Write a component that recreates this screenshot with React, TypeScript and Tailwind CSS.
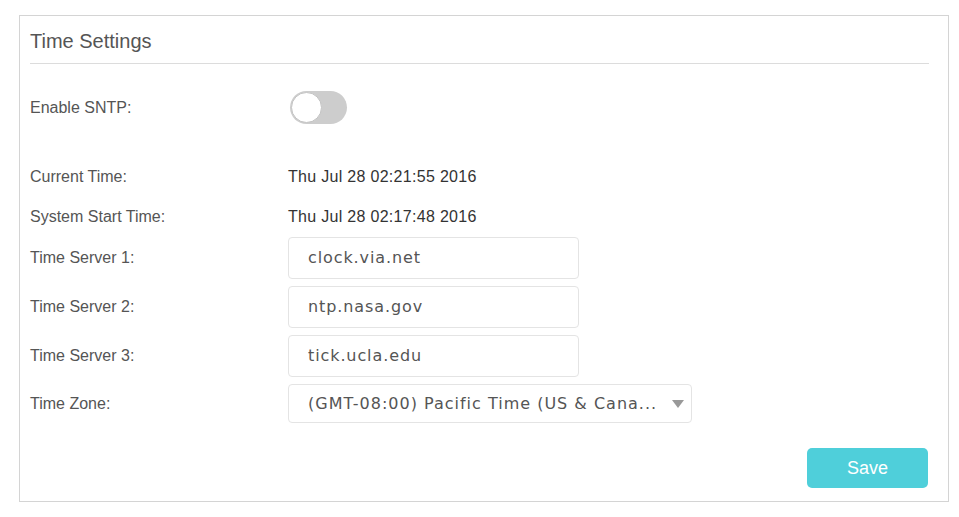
import React from "react";

const labelCls = "w-[258px] shrink-0 text-[16px] text-[#555]";
const font = { fontFamily: "'Liberation Sans', Arial, sans-serif" };
const inputFont = { fontFamily: "'DejaVu Sans', Verdana, sans-serif" };

function TextRow({ label, value, top }: { label: string; value: string; top: string }) {
  return (
    <div className={`flex items-center ${top}`}>
      <div className={labelCls}>{label}</div>
      <div className="h-[42px] w-[291px] rounded-[4px] border border-[#e4e4e4] bg-white flex items-center pl-[19px] text-[16px] tracking-[0.9px] text-[#555]" style={inputFont}>
        {value}
      </div>
    </div>
  );
}

export default function App() {
  return (
    <div className="w-[959px] h-[517px] bg-white pt-[15px] pl-[19px]" style={font}>
      <div className="w-[930px] h-[487px] border border-[#d4d4d4] pl-[10px] pr-[19px]">
        <div className="pt-[13px] pb-[10px] text-[20px] leading-[24px] text-[#555]">Time Settings</div>
        <div className="h-px bg-[#dcdcdc]" />
        <div className="flex items-center mt-[27px] h-[33px]">
          <div className={labelCls}>Enable SNTP:</div>
          <div className="ml-[2px] w-[57px] h-[33px] rounded-full bg-[#cdcdcd] relative">
            <div className="absolute left-[1px] top-[1px] w-[31px] h-[31px] rounded-full bg-white border border-[#c4c4c4]" />
          </div>
        </div>
        <div className="flex items-center mt-[43px] h-[20px]">
          <div className={labelCls}>Current Time:</div>
          <div className="text-[16px] tracking-[0.3px] text-[#333]">Thu Jul 28 02:21:55 2016</div>
        </div>
        <div className="flex items-center mt-[20px] h-[20px]">
          <div className={labelCls}>System Start Time:</div>
          <div className="text-[16px] tracking-[0.3px] text-[#333]">Thu Jul 28 02:17:48 2016</div>
        </div>
        <TextRow label="Time Server 1:" value="clock.via.net" top="mt-[10px]" />
        <TextRow label="Time Server 2:" value="ntp.nasa.gov" top="mt-[7px]" />
        <TextRow label="Time Server 3:" value="tick.ucla.edu" top="mt-[7px]" />
        <div className="flex items-center mt-[7px]">
          <div className={labelCls}>Time Zone:</div>
          <div className="h-[39px] w-[404px] rounded-[4px] border border-[#e4e4e4] bg-white flex items-center pl-[19px] pr-[7px] text-[16px] text-[#555]" style={inputFont}>
            <span className="flex-1 whitespace-nowrap overflow-hidden tracking-[1px]">(GMT-08:00) Pacific Time (US &amp; Cana...</span>
            <svg width="12" height="8" viewBox="0 0 12 8" className="ml-[4px] shrink-0">
              <path d="M0 0 L12 0 L6 8 Z" fill="#999" />
            </svg>
          </div>
        </div>
        <div className="flex justify-end mt-[25px] pr-[1px]">
          <button className="w-[121px] h-[40px] rounded-[5px] bg-[#4fcfda] text-white text-[18px]">Save</button>
        </div>
      </div>
    </div>
  );
}
